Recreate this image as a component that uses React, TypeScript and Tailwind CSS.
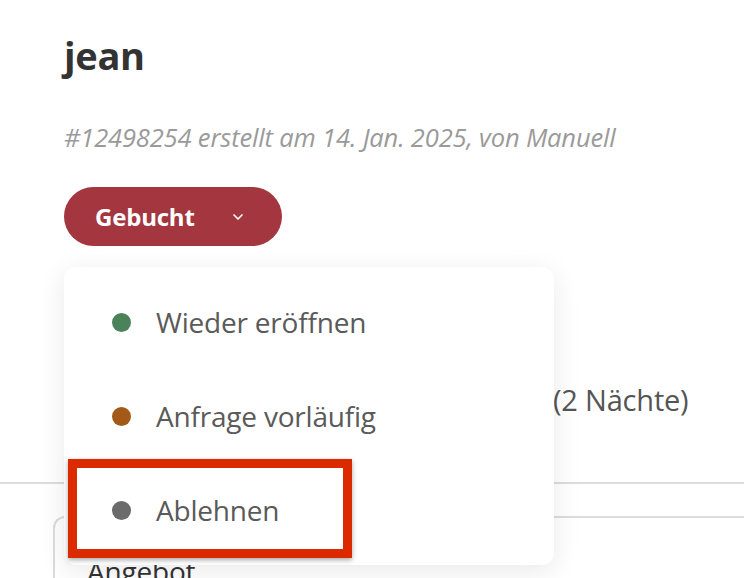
import { ChevronDown } from 'lucide-react'

const statuses = [
  { label: 'Wieder eröffnen', dot: 'bg-[#4a8259]' },
  { label: 'Anfrage vorläufig', dot: 'bg-[#a35a17]' },
  { label: 'Ablehnen', dot: 'bg-[#6b6b6b]' },
]

export default function App() {
  return (
    <div className="relative h-[578px] w-full overflow-hidden bg-white font-['Open_Sans',sans-serif] text-[#333]">
      {/* Header */}
      <div className="px-16 pt-[30px]">
        <h1 className="text-[38px] font-bold leading-[50px] tracking-[-0.3px] text-[#333]">jean</h1>
        <p className="mt-[42px] text-[25.5px] italic leading-[30px] tracking-[-0.15px] text-[#9a9a9a]">
          #12498254 erstellt am 14. Jan. 2025, von Manuell
        </p>

        <div className="relative mt-[35px]">
          <button className="flex h-[59px] w-[218px] items-center rounded-full bg-[#a3363f] pl-[31px] text-[24px] font-bold tracking-[-0.2px] text-white">
            Gebucht
            <ChevronDown size={16} strokeWidth={2.5} className="ml-[35px]" />
          </button>

          {/* Status menu */}
          <div className="absolute left-0 top-[80px] z-10 w-[490px] rounded-xl bg-white py-2 shadow-[0_6px_28px_rgba(0,0,0,0.09)]">
            {statuses.map(s => (
              <div key={s.label} className="flex h-[94px] items-center pl-12 text-[28px] tracking-[-0.2px] text-[#5a5a5a]">
                <span className={`h-[19px] w-[19px] rounded-full ${s.dot}`} />
                <span className="ml-[25px]">{s.label}</span>
              </div>
            ))}
            <div className="pointer-events-none absolute left-[4px] top-[192px] h-[99px] w-[284px] border-[9px] border-[#dc2a00] shadow-[0_2px_5px_rgba(0,0,0,0.35)]" />
          </div>
        </div>
      </div>

      {/* Content behind the menu */}
      <div className="mt-[138px] flex whitespace-nowrap pl-16 text-[29px] leading-[32px] tracking-[-0.2px] text-[#555]">
        <span className="w-[489px] shrink-0" />
        <span>(2 Nächte)</span>
      </div>
      <div className="mt-[66px] h-[2px] w-full bg-[#dcdcdc]" />
      <div className="ml-[53px] mt-[32px] h-[100px] rounded-tl-xl border-l-2 border-t-2 border-[#dcdcdc] pl-[32px] pt-[37px]">
        <span className="text-[28px] leading-[32px] tracking-[-0.2px] text-[#333]">Angebot</span>
      </div>
    </div>
  )
}
